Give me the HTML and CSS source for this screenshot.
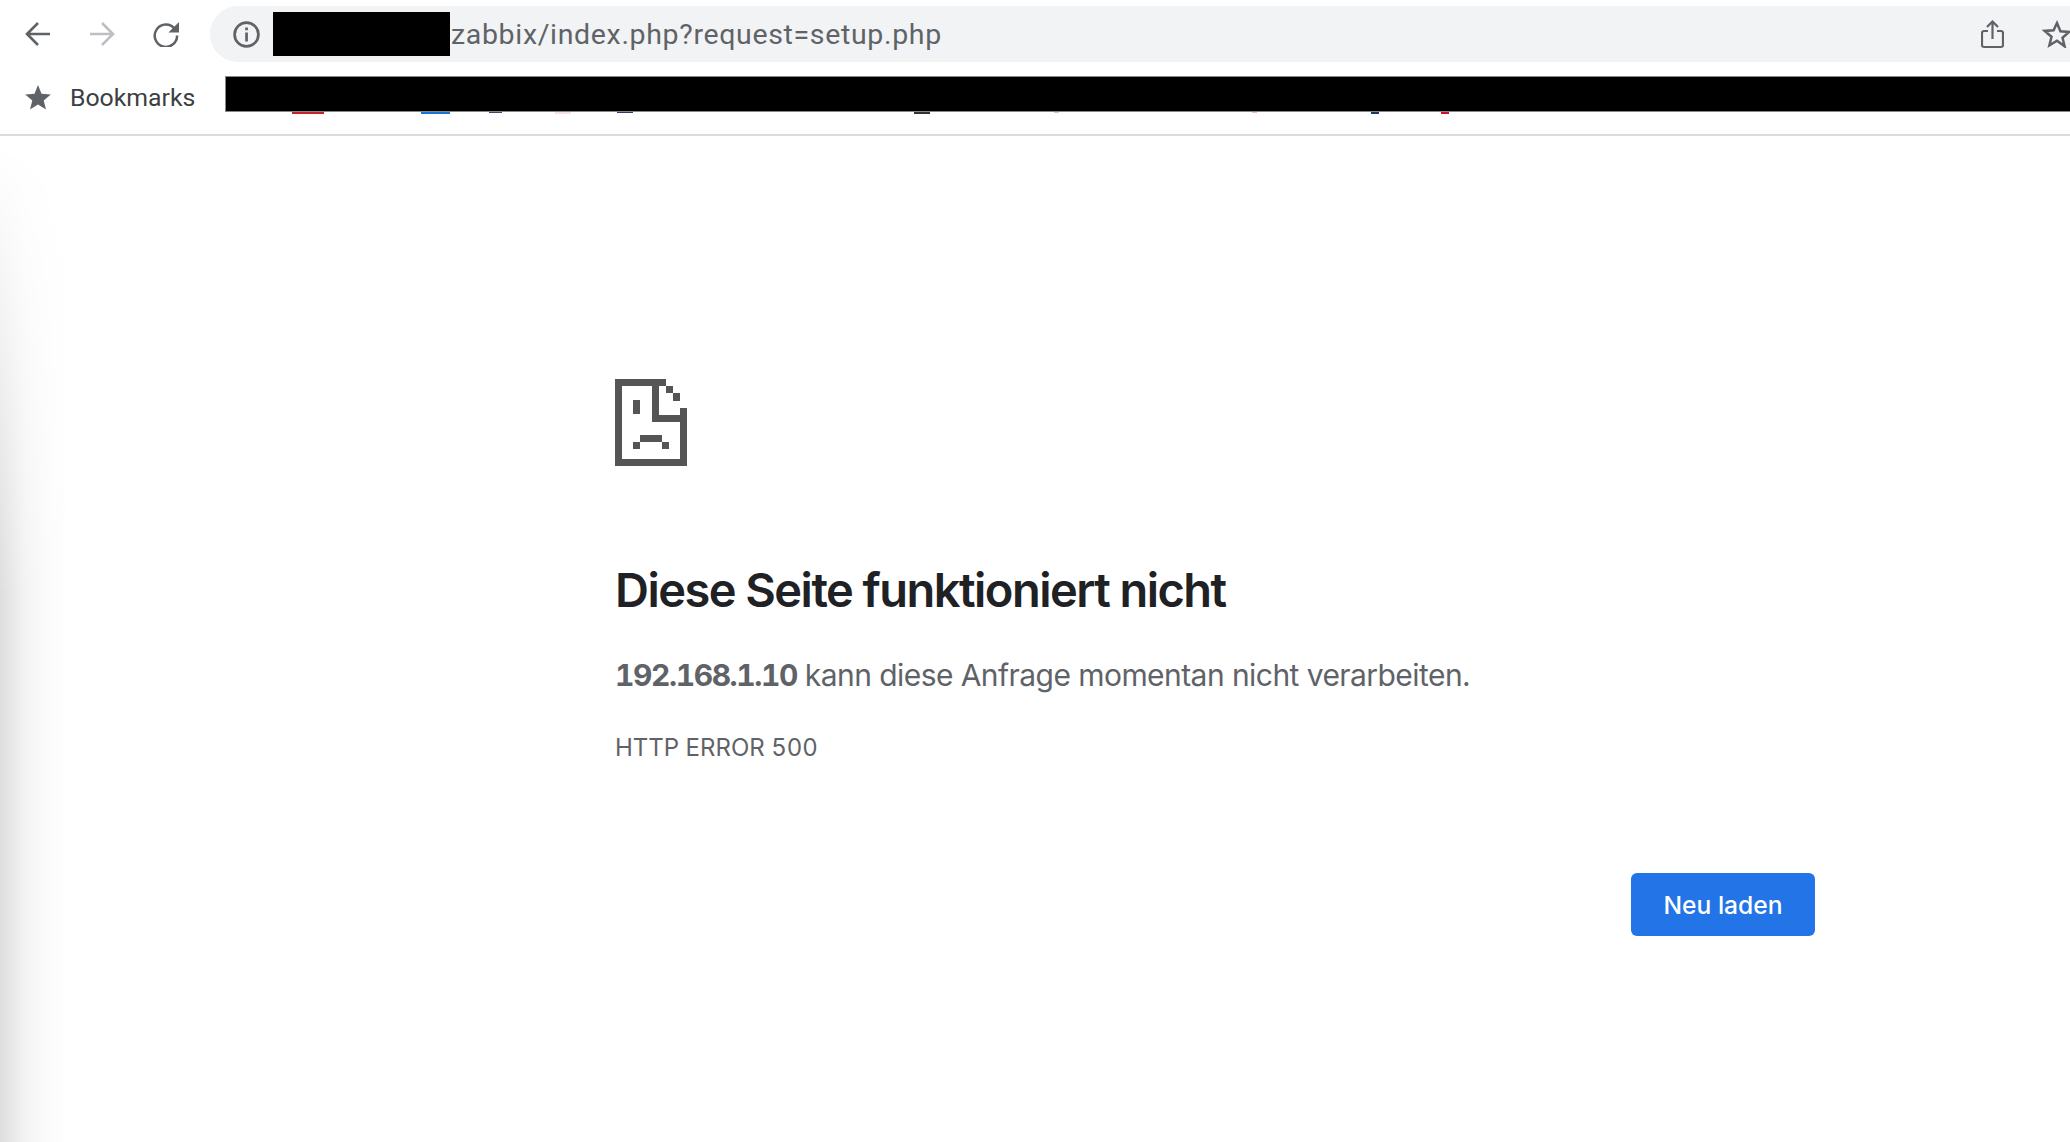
FILE: index.html
```html
<!DOCTYPE html>
<html lang="de">
<head>
<meta charset="utf-8">
<title>192.168.1.10</title>
<link rel="stylesheet" href="styles.css">
</head>
<body>
<header class="chrome">
  <div class="toolbar">
    <div class="nav">
      <svg class="nav-icon" viewBox="0 0 26 26"><path d="M25 13H2M13 2 2 13l11 11" fill="none" stroke="#5f6368" stroke-width="2.6"/></svg>
      <svg class="nav-icon" viewBox="0 0 26 26"><path d="M1 13h23M13 2l11 11-11 11" fill="none" stroke="#bdbfc2" stroke-width="2.6"/></svg>
      <svg class="nav-icon" viewBox="0 0 27 27"><path d="M22.6 8.2A11.6 11.6 0 1 0 25 15" fill="none" stroke="#5f6368" stroke-width="2.6"/><path d="M27 1v11H16z" fill="#5f6368"/></svg>
    </div>
    <div class="omnibox">
      <svg class="info" viewBox="0 0 27 27"><circle cx="13.5" cy="13.5" r="11.9" fill="none" stroke="#5f6368" stroke-width="2.7"/><path d="M12.2 6.5h2.7v2.7h-2.700zM12.2 11.5h2.7v9h-2.700z" fill="#5f6368"/></svg>
      <div class="redact-host"></div>
      <span class="url">zabbix/index.php?request=setup.php</span>
      <svg class="share" viewBox="0 0 23 29"><path d="M7 11H3a2 2 0 0 0-2 2v12a2 2 0 0 0 2 2h17a2 2 0 0 0 2-2V13a2 2 0 0 0-2-2h-4" fill="none" stroke="#5f6368" stroke-width="2.2"/><path d="M11.500 19V2M6 7l5.500-5.500L17 7" fill="none" stroke="#5f6368" stroke-width="2.2"/></svg>
      <svg class="star-outline" viewBox="0 0 30 28"><path d="m15 3 3.400 8.200 8.800.7-6.700 5.800 2.100 8.600L15 20.700l-7.600 4.600 2.100-8.600-6.700-5.800 8.800-.7z" fill="none" stroke="#5f6368" stroke-width="2.500"/></svg>
    </div>
  </div>
  <div class="bookmarks">
    <svg class="bm-star" viewBox="0 0 26 25"><path d="m13 0 3.500 8.700 9.300.7-7.100 6 2.300 9.100L13 19.600l-8 4.900 2.300-9.100-7.100-6 9.300-.7z" fill="#5f6368"/></svg>
    <span class="bm-label">Bookmarks</span>
    <div class="bm-items">
      <div class="redact-bar"></div>
      <svg class="favicon-strip" viewBox="0 0 1845 2" preserveAspectRatio="none">
        <rect x="67" width="32" height="2" fill="#c5222b"/>
        <rect x="196" width="29" height="2" fill="#1a73d8"/>
        <rect x="264" width="13" height="1" fill="#3c4a6b"/>
        <rect x="330" width="16" height="2" fill="#f7dfe3"/>
        <rect x="392" width="16" height="1" fill="#2b3a70"/>
        <rect x="689" width="16" height="2" fill="#333333"/>
        <rect x="829" width="5" height="1" fill="#f0b9c4"/>
        <rect x="1027" width="5" height="1" fill="#f0b9c4"/>
        <rect x="1146" width="8" height="2" fill="#1d3766"/>
        <rect x="1216" width="8" height="2" fill="#d0112b"/>
      </svg>
    </div>
  </div>
</header>
<main class="page">
  <div class="edge-shadow"></div>
  <div class="interstitial">
    <svg class="sad-icon" viewBox="0 0 72 87"><path d="M0 0h51v7H44v29h21v-7h7v58H0zM7 7v73h58V43H37V7zM51 7h7v7h-7zM58 14h7v8h-7zM18 21h7v14h-7zM25 56h22v7H25zM18 63h7v7h-7zM47 63h7v7h-7z" fill="#555555" fill-rule="evenodd"/></svg>
    <h1 class="title">Diese Seite funktioniert nicht</h1>
    <p class="message"><strong>192.168.1.10</strong> kann diese Anfrage momentan nicht verarbeiten.</p>
    <p class="code">HTTP ERROR 500</p>
    <div class="actions"><button class="reload" type="button">Neu laden</button></div>
  </div>
</main>
</body>
</html>
```
FILE: styles.css
```css
* { box-sizing: border-box; }
html, body { margin: 0; height: 100%; overflow: hidden; background: #fff; }
body { font-family: Inter, "Liberation Sans", sans-serif; display: flex; flex-direction: column; height: 1142px; }

.chrome { flex: none; height: 136px; border-bottom: 2px solid #dcdcdc; background: #fff; }

.toolbar { display: flex; height: 68px; padding: 6px 0 6px 25px; align-items: stretch; }
.nav { display: flex; align-items: center; gap: 38px; width: 185px; flex: none; }
.nav-icon { width: 26px; height: 26px; flex: none; }

.omnibox { flex: 1; min-width: 0; display: flex; align-items: center; background: #f1f3f4; border-radius: 28px 0 0 28px; padding-left: 23px; overflow: hidden; }
.info { width: 27px; height: 27px; flex: none; }
.redact-host { width: 177px; height: 44px; background: #000; margin: 0 1px 0 13px; flex: none; }
.url { font-family: Roboto, sans-serif; font-size: 28.5px; letter-spacing: 0.66px; color: #5f6368; white-space: nowrap; flex: 1; }
.share { width: 23px; height: 29px; flex: none; margin-right: 38px; }
.star-outline { width: 30px; height: 28px; flex: none; margin-right: -2px; }

.bookmarks { display: flex; align-items: flex-start; height: 66px; padding-left: 25px; }
.bm-star { width: 26px; height: 25px; flex: none; margin: 17px 19px 0 0; }
.bm-label { font-family: Roboto, sans-serif; font-size: 24.8px; line-height: 28px; color: #3c4043; flex: none; width: 155px; margin-top: 16px; }
.bm-items { flex: 1; min-width: 0; padding-top: 8px; }
.redact-bar { height: 36px; background: #000; border: 1px solid #888; border-right: 0; }
.favicon-strip { display: block; width: 100%; height: 2px; }

.page { flex: 1; position: relative; background: #fff; }
.edge-shadow { position: absolute; left: 0; top: 0; width: 80px; height: 100%; background: linear-gradient(90deg, #dedede 0, #f4f4f4 26px, #fcfcfc 52px, #ffffff 70px); -webkit-mask-image: linear-gradient(180deg, transparent 10px, #000 460px); mask-image: linear-gradient(180deg, transparent 10px, #000 460px); }

.interstitial { position: relative; width: 1200px; margin-left: 615px; padding-top: 243px; display: flex; flex-direction: column; }
.sad-icon { width: 72px; height: 87px; display: block; shape-rendering: crispEdges; }
.title { margin: 96px 0 0; font-size: 47px; line-height: 56px; font-weight: 600; color: #202124; letter-spacing: -1.53px; white-space: nowrap; }
.message { margin: 37px 0 0; font-size: 30px; line-height: 40px; letter-spacing: -0.56px; color: #5f6368; white-space: nowrap; }
.message strong { font-weight: 700; font-variant-numeric: tabular-nums; letter-spacing: -1.4px; }
.code { margin: 38px 0 0; font-size: 24px; line-height: 30px; color: #5f6368; font-variant-numeric: tabular-nums; }
.actions { display: flex; justify-content: flex-end; margin-top: 110px; }
.reload { width: 184px; height: 63px; border: 0; border-radius: 6px; background: #2374e6; color: #fff; font-family: Inter, sans-serif; font-size: 24.6px; font-weight: 500; padding: 0; }
```
